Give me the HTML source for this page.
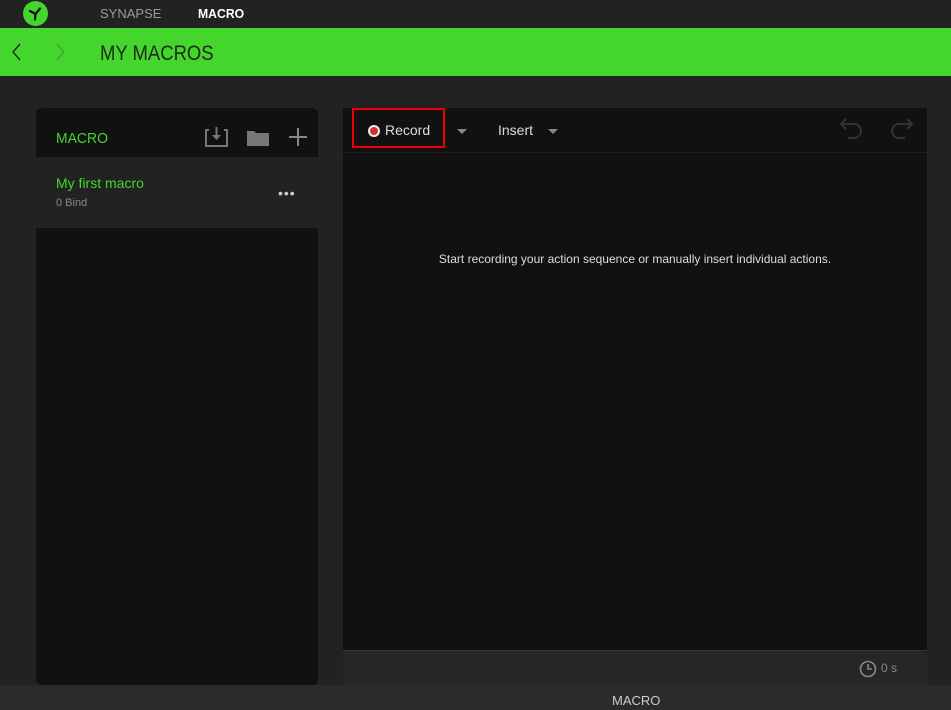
<!DOCTYPE html><html><head><style>
*{margin:0;padding:0;box-sizing:border-box}
body{width:951px;height:710px;background:#222;font-family:"Liberation Sans",sans-serif;position:relative;overflow:hidden}
.a{position:absolute}
</style></head><body>
<div class="a" style="left:0;top:0;width:951px;height:28px;background:#222"></div>
<div class="a" style="left:23px;top:1px;width:25px;height:25px;border-radius:50%;background:#44d62c"></div>
<svg class="a" style="left:23px;top:1px" width="25" height="25" viewBox="0 0 25 25"><path d="M12.5 13 L12 18.5 M12.5 13 L7 10 M12.5 13 L17 7.5" stroke="#111" stroke-width="2.2" fill="none" stroke-linecap="round"/></svg>
<div class="a" style="left:100px;top:6px;font-size:13px;color:#9a9a9a">SYNAPSE</div>
<div class="a" style="left:198px;top:6px;font-size:13px;color:#fff;font-weight:bold;transform:scaleX(0.94);transform-origin:left">MACRO</div>
<div class="a" style="left:0;top:28px;width:951px;height:48px;background:#44d62c"></div>
<svg class="a" style="left:8px;top:42px" width="60" height="20"><path d="M12 2 L5 10 L12 18" stroke="#1f2a1c" stroke-width="1.4" fill="none"/><path d="M49 2 L56 10 L49 18" stroke="#3aa82a" stroke-width="1.4" fill="none"/></svg>
<div class="a" style="left:100px;top:42px;font-size:21px;color:#1c2a1a;transform:scaleX(0.88);transform-origin:left">MY MACROS</div>
<div class="a" style="left:36px;top:108px;width:282px;height:577px;background:#111;border-radius:6px"></div>
<div class="a" style="left:36px;top:157px;width:282px;height:71px;background:#222"></div>
<div class="a" style="left:56px;top:130px;font-size:15px;color:#44d62c;transform:scaleX(0.93);transform-origin:left">MACRO</div>
<svg class="a" style="left:205px;top:125px" width="105" height="25"><path d="M4 5 H1 V21 H22 V5 H19" stroke="#777" stroke-width="2" fill="none"/><path d="M11.5 2 V12" stroke="#777" stroke-width="2"/><path d="M7 10 L11.5 15 L16 10Z" fill="#777"/><path d="M42 6 H49 L51 8 H64 V21 H42Z" fill="#777"/><path d="M93 3 V21 M84 12 H102" stroke="#888" stroke-width="2"/></svg>
<div class="a" style="left:56px;top:175px;font-size:14px;color:#44d62c">My first macro</div>
<div class="a" style="left:56px;top:197px;font-size:11px;color:#888">0 Bind</div>
<div class="a" style="left:278px;top:185px;font-size:14px;color:#ccc;letter-spacing:1px">•••</div>
<div class="a" style="left:343px;top:108px;width:584px;height:542px;background:#111"></div>
<div class="a" style="left:343px;top:152px;width:584px;height:1px;background:#1e1e1e"></div>
<div class="a" style="left:343px;top:650px;width:584px;height:35px;background:#262626;border-top:1px solid #333"></div>
<div class="a" style="left:352px;top:108px;width:93px;height:40px;border:2px solid #e00"></div>
<div class="a" style="left:368px;top:125px;width:12px;height:12px;border-radius:50%;background:#d1313c;border:2px solid #eee"></div>
<div class="a" style="left:385px;top:122px;font-size:14px;color:#ddd">Record</div>
<div class="a" style="left:457px;top:129px;border-left:5px solid transparent;border-right:5px solid transparent;border-top:5px solid #888"></div>
<div class="a" style="left:498px;top:122px;font-size:14px;color:#ddd">Insert</div>
<div class="a" style="left:548px;top:129px;border-left:5px solid transparent;border-right:5px solid transparent;border-top:5px solid #888"></div>
<svg class="a" style="left:838px;top:117px" width="80" height="26"><path d="M8 2 L3 7 L8 12 M3 7 H16 A6 6 0 0 1 16 21 H10" stroke="#333" stroke-width="2" fill="none"/><path d="M69 2 L74 7 L69 12 M74 7 H61 A6 6 0 0 0 61 21 H67" stroke="#333" stroke-width="2" fill="none"/></svg>
<div class="a" style="left:343px;top:252px;width:584px;text-align:center;font-size:12px;color:#ddd">Start recording your action sequence or manually insert individual actions.</div>
<svg class="a" style="left:858px;top:659px" width="20" height="20"><circle cx="10" cy="10" r="7.5" stroke="#888" stroke-width="1.6" fill="none"/><path d="M10 5 V10 H14" stroke="#888" stroke-width="1.6" fill="none"/></svg>
<div class="a" style="left:881px;top:661px;font-size:12px;color:#888">0 s</div>
<div class="a" style="left:0;top:685px;width:951px;height:25px;background:#2b2b2b"></div>
<div class="a" style="left:612px;top:693px;font-size:13px;color:#ccc">MACRO</div>
</body></html>
